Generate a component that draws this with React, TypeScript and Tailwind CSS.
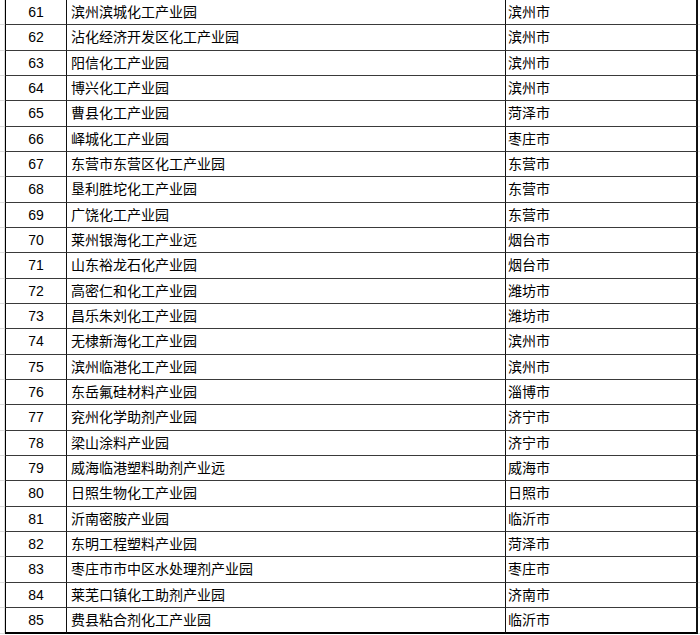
type Park = {
  no: number;
  name: string;
  city: string;
};

const parks: Park[] = [
  { no: 61, name: "滨州滨城化工产业园", city: "滨州市" },
  { no: 62, name: "沾化经济开发区化工产业园", city: "滨州市" },
  { no: 63, name: "阳信化工产业园", city: "滨州市" },
  { no: 64, name: "博兴化工产业园", city: "滨州市" },
  { no: 65, name: "曹县化工产业园", city: "菏泽市" },
  { no: 66, name: "峄城化工产业园", city: "枣庄市" },
  { no: 67, name: "东营市东营区化工产业园", city: "东营市" },
  { no: 68, name: "垦利胜坨化工产业园", city: "东营市" },
  { no: 69, name: "广饶化工产业园", city: "东营市" },
  { no: 70, name: "莱州银海化工产业远", city: "烟台市" },
  { no: 71, name: "山东裕龙石化产业园", city: "烟台市" },
  { no: 72, name: "高密仁和化工产业园", city: "潍坊市" },
  { no: 73, name: "昌乐朱刘化工产业园", city: "潍坊市" },
  { no: 74, name: "无棣新海化工产业园", city: "滨州市" },
  { no: 75, name: "滨州临港化工产业园", city: "滨州市" },
  { no: 76, name: "东岳氟硅材料产业园", city: "淄博市" },
  { no: 77, name: "兖州化学助剂产业园", city: "济宁市" },
  { no: 78, name: "梁山涂料产业园", city: "济宁市" },
  { no: 79, name: "威海临港塑料助剂产业远", city: "威海市" },
  { no: 80, name: "日照生物化工产业园", city: "日照市" },
  { no: 81, name: "沂南密胺产业园", city: "临沂市" },
  { no: 82, name: "东明工程塑料产业园", city: "菏泽市" },
  { no: 83, name: "枣庄市市中区水处理剂产业园", city: "枣庄市" },
  { no: 84, name: "莱芜口镇化工助剂产业园", city: "济南市" },
  { no: 85, name: "费县粘合剂化工产业园", city: "临沂市" },
];

export default function App() {
  return (
    <div className="w-[700px] h-[635px] overflow-hidden bg-white text-[14px] leading-none text-black [font-family:'Liberation_Sans','Noto_Sans_CJK_SC',sans-serif]">
      {parks.map((p, i) => {
        const last = i === parks.length - 1;
        const line = last ? "border-b-2 border-b-black" : "border-b border-b-[#3a3a3a]";
        return (
          <div key={p.no} className={`flex ${last ? "h-[26.5px]" : "h-[25.333px]"}`}>
            <div className="w-[5px] shrink-0 border-r border-b border-[#dcdcdc]" />
            <div className={`flex w-[62px] shrink-0 items-center justify-center border-l border-r border-l-black border-r-[#111] ${line}`}>
              {p.no}
            </div>
            <div className={`flex w-[439px] shrink-0 items-center border-r border-r-[#111] pl-[4px] ${line}`}>
              {p.name}
            </div>
            <div className={`flex w-[192px] shrink-0 items-center border-r-2 border-r-[#111] pl-[2px] ${line}`}>
              {p.city}
            </div>
            <div className="flex-1 border-b border-[#dcdcdc]" />
          </div>
        );
      })}
    </div>
  );
}
